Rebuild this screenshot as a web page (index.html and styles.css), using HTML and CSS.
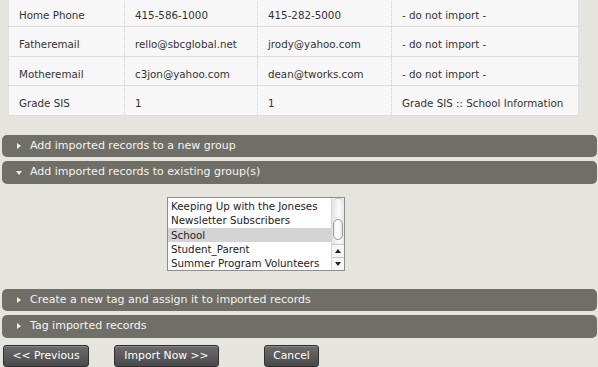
FILE: index.html
```html
<!DOCTYPE html>
<html lang="en">
<head>
  <meta charset="UTF-8" />
  <title>Import Contacts - Step 3</title>
  <link rel="stylesheet" href="styles.css">
</head>
<body>

<div class="page">
  <table class="fields">
    <tr>
      <td class="col-name">Home Phone</td>
      <td class="col-a">415-586-1000</td>
      <td class="col-b">415-282-5000</td>
      <td class="col-map">- do not import -</td>
    </tr>
    <tr>
      <td class="col-name">Fatheremail</td>
      <td class="col-a">rello@sbcglobal.net</td>
      <td class="col-b">jrody@yahoo.com</td>
      <td class="col-map">- do not import -</td>
    </tr>
    <tr>
      <td class="col-name">Motheremail</td>
      <td class="col-a">c3jon@yahoo.com</td>
      <td class="col-b">dean@tworks.com</td>
      <td class="col-map">- do not import -</td>
    </tr>
    <tr>
      <td class="col-name">Grade SIS</td>
      <td class="col-a">1</td>
      <td class="col-b">1</td>
      <td class="col-map">Grade SIS :: School Information</td>
    </tr>
  </table>

  <div class="sections">
    <div class="section">
      <div class="section-head">Add imported records to a new group</div>
    </div>

    <div class="section open">
      <div class="section-head">Add imported records to existing group(s)</div>
      <div class="section-body">
        <div class="listbox">
          <ul class="options">
            <li>Keeping Up with the Joneses</li>
            <li>Newsletter Subscribers</li>
            <li class="selected">School</li>
            <li>Student_Parent</li>
            <li>Summer Program Volunteers</li>
          </ul>
          <div class="scrollbar">
            <div class="track">
              <div class="thumb"></div>
            </div>
            <div class="arrow up"></div>
            <div class="arrow down"></div>
          </div>
        </div>
      </div>
    </div>

    <div class="section">
      <div class="section-head">Create a new tag and assign it to imported records</div>
    </div>

    <div class="section">
      <div class="section-head">Tag imported records</div>
    </div>
  </div>

  <div class="actions">
    <button class="btn btn-prev">&lt;&lt; Previous</button>
    <button class="btn btn-import">Import Now &gt;&gt;</button>
    <button class="btn btn-cancel">Cancel</button>
  </div>
</div>

</body>
</html>
```

FILE: styles.css
```css
html, body {
  margin: 0; padding: 0;
  background: #e6e5dd;
  color: #333;
  font-family: 'DejaVu Sans', Verdana, sans-serif;
  overflow: hidden;
}

.page {
  margin-top: -2px;
}

/* field mapping table */
.fields {
  margin-left: 8px;
  width: 571px;
  border-collapse: collapse;
  background: #f7f7f7;
  border: 1px solid #e0e0e0;
  border-top: none;
  font-size: 10.3px;
}

.fields td {
  padding: 11px 10px 5px 10px;
  line-height: 12.4px;
  border-bottom: 1px solid #dddddd;
  border-left: 1px dotted #cfcfcf;
  white-space: nowrap;
}

.fields td.col-name { width: 95px; border-left: none; }
.fields td.col-a { width: 112px; }
.fields td.col-b { width: 113px; }

/* collapsible sections */
.sections {
  margin: 19px 1px 0 2px;
}

.section-head {
  position: relative;
  height: 22.5px;
  line-height: 22.5px;
  padding-left: 28px;
  margin-bottom: 4px;
  background: #6f6f68;
  color: #f4f4f0;
  border-radius: 5px;
  font-size: 11px;
}

.section-head::before {
  content: '';
  position: absolute;
  left: 15px;
  top: 8px;
  border-left: 4px solid #eee;
  border-top: 3px solid transparent;
  border-bottom: 3px solid transparent;
}

.section.open .section-head::before {
  left: 14px;
  top: 10px;
  border-top: 4px solid #eee;
  border-left: 3.5px solid transparent;
  border-right: 3.5px solid transparent;
  border-bottom: none;
}

.section-body {
  padding: 9px 0 18px 165px;
}

/* group picker */
.listbox {
  display: flex;
  width: 176px;
  height: 72px;
  background: #fff;
  border: 1px solid #8e8e8e;
  overflow: hidden;
}

.options {
  flex: 1;
  list-style: none;
  margin: 0;
  padding: 1.5px 0 0;
  font-size: 10.3px;
  color: #222;
}

.options li {
  height: 14.2px;
  line-height: 14.2px;
  padding-left: 3px;
  white-space: nowrap;
}

.options li.selected {
  background: #d4d4d4;
}

.scrollbar {
  width: 12px;
  display: flex;
  flex-direction: column;
  background: #f2f2f2;
  border-left: 1px solid #d6d6d6;
}

.track {
  flex: 1;
  position: relative;
  border-radius: 6px 6px 0 0;
  border-top: 1px solid #c8c8c8;
  background: linear-gradient(to right, #e4e4e4, #fafafa 60%, #e8e8e8);
}

.thumb {
  position: absolute;
  left: 1px;
  right: 1px;
  top: 20px;
  height: 19px;
  border: 1px solid #9a9a9a;
  border-radius: 6px;
  background: linear-gradient(to right, #f0f0f0, #fff 50%, #e6e6e6);
}

.arrow {
  position: relative;
  height: 12px;
  border-top: 1px solid #c8c8c8;
  background: #f6f6f6;
}

.arrow::after {
  content: '';
  position: absolute;
  left: 3px;
  top: 4px;
  border-left: 3px solid transparent;
  border-right: 3px solid transparent;
}

.arrow.up::after { border-bottom: 4px solid #222; }
.arrow.down::after { border-top: 4px solid #222; }

/* buttons */
.actions {
  display: flex;
  margin: 7px 0 0 3px;
}

.btn {
  height: 22px;
  padding: 0;
  background: linear-gradient(#6c6c6c, #4a4a4a);
  border: 1px solid #2f2f2f;
  border-radius: 3px;
  color: #fff;
  font-family: 'DejaVu Sans', Verdana, sans-serif;
  font-size: 10.8px;
  box-shadow: inset 0 1px 0 #888;
}

.btn-prev { width: 86px; }
.btn-import { width: 105px; margin-left: 25px; }
.btn-cancel { width: 55px; margin-left: 45px; }
```
